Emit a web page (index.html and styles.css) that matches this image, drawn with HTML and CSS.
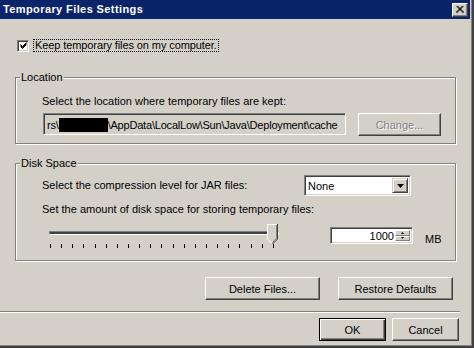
FILE: index.html
```html
<!DOCTYPE html>
<html>
<head>
  <title>Temporary Files Settings</title>
  <link rel="stylesheet" href="styles.css">
  <meta charset="utf-8">
</head>
<body>
  <div class="window">
    <div class="titlebar">
      <span class="title">Temporary Files Settings</span>
      <button class="close" title="Close">
        <svg width="8" height="7" viewBox="0 0 8 7"><path d="M0.5 0 L7.5 7 M1.5 0 L8 6.5 M7.5 0 L0.5 7 M6.5 0 L0 6.5" stroke="#000" stroke-width="1" fill="none"/></svg>
      </button>
    </div>

    <div class="content">
      <label class="check-row">
        <span class="checkbox">
          <svg width="7" height="7" viewBox="0 0 7 7"><path d="M0.5 2.5 L2.5 4.5 L6.5 0.5 M0.5 3.5 L2.5 5.5 L6.5 1.5 M0.5 4.5 L2.5 6.5 L6.5 2.5" stroke="#000" stroke-width="1" fill="none"/></svg>
        </span>
        <span class="focus">Keep temporary files on my computer.</span>
      </label>

      <fieldset class="group">
        <legend>Location</legend>
        <div class="group-body loc-body">
          <p class="text">Select the location where temporary files are kept:</p>
          <div class="path-row">
            <div class="field path">rs\<span class="redact"></span>\AppData\LocalLow\Sun\Java\Deployment\cache</div>
            <button class="btn btn-change" disabled>Change...</button>
          </div>
        </div>
      </fieldset>

      <fieldset class="group group-disk">
        <legend>Disk Space</legend>
        <div class="group-body disk-body">
          <div class="compress-row">
            <span class="text compress-label">Select the compression level for JAR files:</span>
            <div class="field combo">
              <span class="combo-value">None</span>
              <span class="combo-btn">
                <svg width="7" height="4" viewBox="0 0 7 4"><path d="M0 0 H7 L3.5 4 Z" fill="#000"/></svg>
              </span>
            </div>
          </div>
          <p class="text amount-label">Set the amount of disk space for storing temporary files:</p>
          <div class="space-row">
            <div class="slider">
              <div class="track"></div>
              <div class="ticks">
                <i></i><i></i><i></i><i></i><i></i><i></i><i></i>
                <i></i><i></i><i></i><i></i><i></i><i></i><i></i>
                <i></i><i></i><i></i><i></i><i></i><i></i><i></i>
              </div>
              <svg class="thumb" width="12" height="21" viewBox="0 0 12 21">
                <path d="M0.5 0.5 H10.5 V15 L5.5 20 L0.5 15 Z" fill="#D4D0C8"/>
                <path d="M0.5 15 V0.5 H10" stroke="#fff" fill="none"/>
                <path d="M0.5 15 L5 19.5" stroke="#fff" fill="none"/>
                <path d="M10.5 0 V15 L5.5 20" stroke="#404040" fill="none"/>
                <path d="M9.5 1 V14.5 L5.5 18.5" stroke="#808080" fill="none"/>
              </svg>
            </div>
            <div class="field spin">
              <span class="spin-value">1000</span>
              <span class="spin-btns">
                <span class="spin-btn"><svg width="3" height="2" viewBox="0 0 3 2"><path d="M1.5 0 L3 2 H0 Z" fill="#000"/></svg></span>
                <span class="spin-btn"><svg width="3" height="2" viewBox="0 0 3 2"><path d="M0 0 H3 L1.5 2 Z" fill="#000"/></svg></span>
              </span>
            </div>
            <span class="text unit">MB</span>
          </div>
        </div>
      </fieldset>

      <div class="actions">
        <button class="btn btn-wide">Delete Files...</button>
        <button class="btn btn-wide">Restore Defaults</button>
      </div>
    </div>

    <div class="separator"></div>

    <div class="footer">
      <button class="btn btn-small btn-default">OK</button>
      <button class="btn btn-small">Cancel</button>
    </div>
  </div>
</body>
</html>
```

FILE: styles.css
```css
* {
  box-sizing: border-box;
}

body {
  margin: 0;
  background: #D4D0C8;
  color: #000;
  font-family: "Liberation Sans", Arial, sans-serif;
  font-size: 11px;
  line-height: 13px;
}

.window {
  width: 474px;
  height: 348px;
  padding-right: 4px;
  background: #D4D0C8;
  box-shadow: inset -1px -1px #404040, inset -2px -2px #404040, inset -3px -3px #808080;
}

/* title bar */
.titlebar {
  display: flex;
  align-items: center;
  height: 19px;
  padding-left: 3px;
  background: #0A246A;
  color: #fff;
}
.title {
  font-weight: bold;
  font-size: 11px;
  letter-spacing: 0.4px;
}
.close {
  display: flex;
  align-items: center;
  justify-content: center;
  width: 16px;
  height: 14px;
  margin-left: auto;
  margin-right: 2px;
  padding: 0;
  background: #D4D0C8;
  border: 1px solid;
  border-color: #fff #404040 #404040 #fff;
  box-shadow: inset -1px -1px #808080;
}

/* common pieces */
.text {
  margin: 0;
}
.field {
  border: 1px solid;
  border-color: #808080 #fff #fff #808080;
  box-shadow: inset 1px 1px #404040, inset -1px -1px #D4D0C8;
}
.btn {
  height: 23px;
  padding: 0;
  background: #D4D0C8;
  color: #000;
  font-family: inherit;
  font-size: 11px;
  border: 1px solid;
  border-color: #fff #404040 #404040 #fff;
  box-shadow: inset -1px -1px #808080;
}
.btn:disabled {
  color: #808080;
  text-shadow: 1px 1px #fff;
}
.btn-default {
  border-color: #000;
  box-shadow: inset 1px 1px #fff, inset -1px -1px #404040, inset -2px -2px #808080;
}

.content {
  display: flex;
  flex-direction: column;
  align-items: flex-start;
}

/* checkbox */
.check-row {
  display: flex;
  align-items: center;
  margin: 20px 0 0 17px;
  height: 13px;
}
.checkbox {
  display: flex;
  align-items: center;
  justify-content: center;
  width: 12px;
  height: 12px;
  background: #fff;
  border: 1px solid;
  border-color: #808080 #fff #fff #808080;
  box-shadow: inset 1px 1px #404040, inset -1px -1px #D4D0C8;
}
.focus {
  margin-left: 4px;
  padding: 0 1px;
  line-height: 11px;
  letter-spacing: -0.1px;
  border: 1px dotted #000;
}

/* group boxes */
.group {
  width: 441px;
  margin: 19px 0 0 15px;
  padding: 0;
  min-inline-size: 0;
  border: 1px solid #808080;
  box-shadow: 1px 1px #fff, inset 1px 1px #fff;
}
.group legend {
  margin-left: 4px;
  padding: 0 1px;
  background: #D4D0C8;
  line-height: 13px;
}
.group-disk {
  margin-top: 13px;
}
.group-body {
  padding-left: 26px;
}
.loc-body {
  padding-top: 11px;
  padding-bottom: 7px;
}
.path-row {
  display: flex;
  align-items: flex-start;
  margin-top: 5px;
}
.path {
  width: 303px;
  height: 22px;
  margin-left: 1px;
  padding: 4px 0 0 3px;
  letter-spacing: -0.2px;
  white-space: nowrap;
  overflow: hidden;
}
.redact {
  display: inline-block;
  width: 49px;
  height: 14px;
  vertical-align: -3px;
  background: #000;
}
.btn-change {
  width: 83px;
  margin-left: 12px;
}

.disk-body {
  padding-top: 5px;
  padding-bottom: 11px;
}
.compress-row {
  display: flex;
  align-items: center;
  height: 21px;
}
.compress-label {
  flex: 0 0 262px;
}
.combo {
  display: flex;
  width: 107px;
  height: 21px;
  padding: 2px;
  background: #fff;
}
.combo-value {
  flex: 1;
  padding: 2px 0 0 1px;
}
.combo-btn {
  display: flex;
  align-items: center;
  justify-content: center;
  width: 16px;
  background: #D4D0C8;
  border: 1px solid;
  border-color: #D4D0C8 #404040 #404040 #D4D0C8;
  box-shadow: inset 1px 1px #fff, inset -1px -1px #808080;
}
.amount-label {
  margin-top: 7px;
}
.space-row {
  display: flex;
  align-items: flex-start;
  margin-top: 7px;
}

/* slider */
.slider {
  position: relative;
  width: 234px;
  height: 26px;
  margin-left: 7px;
}
.track {
  position: absolute;
  left: 0;
  top: 8px;
  width: 230px;
  height: 4px;
  background: #404040;
  border: 1px solid;
  border-color: #808080 #fff #fff #808080;
}
.ticks {
  position: absolute;
  left: 1px;
  top: 21px;
  width: 224px;
  height: 4px;
  display: flex;
  justify-content: space-between;
}
.ticks i {
  width: 1px;
  height: 4px;
  background: #000;
}
.thumb {
  position: absolute;
  left: 218px;
  top: 1px;
}

/* spinner */
.spin {
  display: flex;
  width: 83px;
  height: 17px;
  margin: 4px 0 0 47px;
  padding: 2px;
  background: #fff;
}
.spin-value {
  flex: 1;
  text-align: right;
  padding-right: 1px;
  line-height: 13px;
}
.spin-btns {
  display: flex;
  flex-direction: column;
  width: 15px;
}
.spin-btn {
  display: flex;
  align-items: center;
  justify-content: center;
  flex: 1;
  background: #D4D0C8;
  border: 1px solid;
  border-color: #fff #808080 #808080 #fff;
}
.unit {
  margin: 10px 0 0 12px;
}

/* buttons */
.actions {
  display: flex;
  justify-content: flex-end;
  gap: 18px;
  width: 100%;
  margin-top: 16px;
  padding-right: 17px;
}
.btn-wide {
  width: 115px;
}
.separator {
  width: 460px;
  height: 2px;
  margin-top: 11px;
  border-top: 1px solid #808080;
  border-bottom: 1px solid #fff;
}
.footer {
  display: flex;
  justify-content: flex-end;
  gap: 6px;
  margin-top: 5px;
  padding-right: 11px;
}
.btn-small {
  width: 67px;
}
```
